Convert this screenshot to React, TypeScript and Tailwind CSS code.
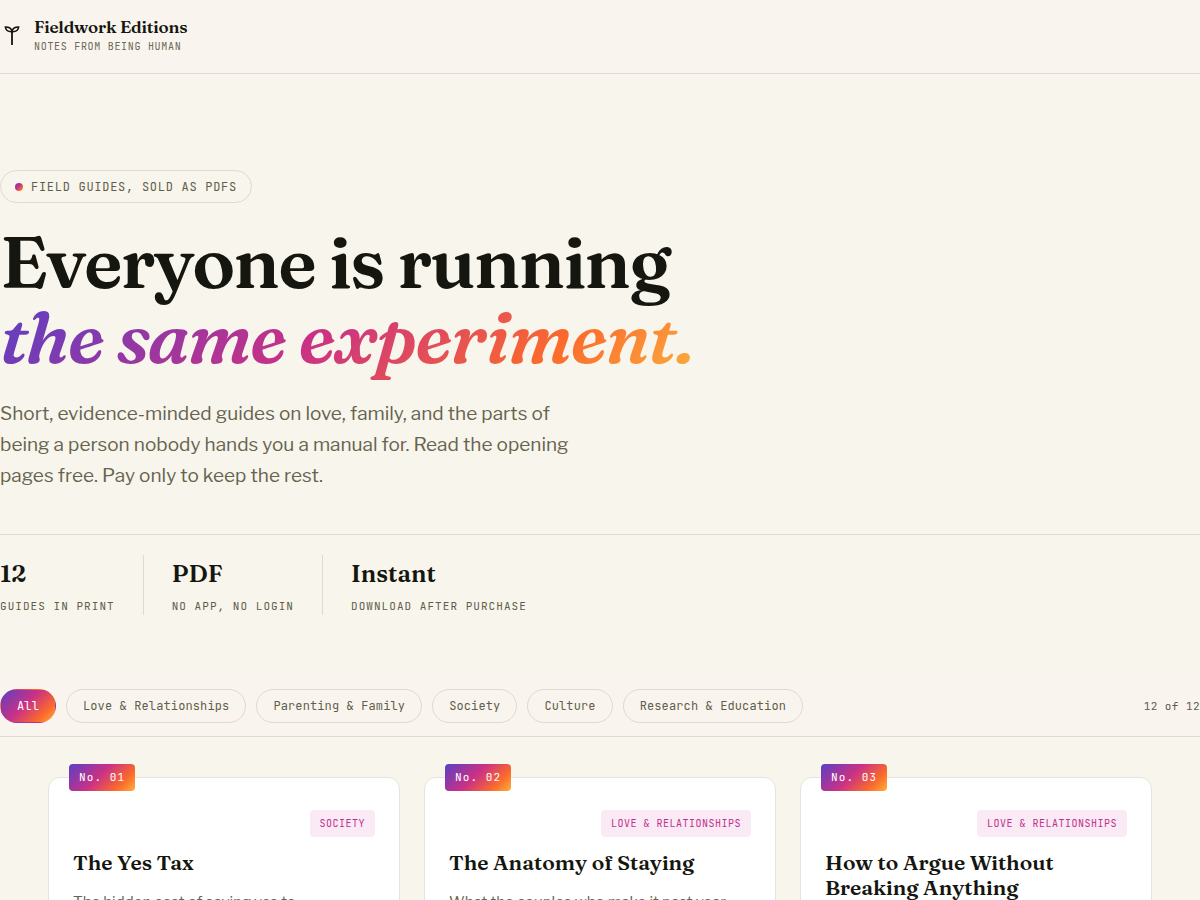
import { useState } from 'react';

const serif = "font-['Fraunces','Liberation_Serif',serif] font-semibold";
const mono = "font-['JetBrains_Mono','DejaVu_Sans_Mono',monospace]";
const spectrum =
  'bg-[linear-gradient(135deg,#5b3fc4_0%,#c93186_45%,#fb6a2c_78%,#fbb040_100%)]';

const categories = [
  'All',
  'Love & Relationships',
  'Parenting & Family',
  'Society',
  'Culture',
  'Research & Education',
];

const stats = [
  { value: '12', label: 'Guides in print' },
  { value: 'PDF', label: 'No app, no login' },
  { value: 'Instant', label: 'Download after purchase' },
];

const guides = [
  {
    no: '01',
    category: 'Society',
    title: 'The Yes Tax',
    blurb: 'The hidden cost of saying yes to',
  },
  {
    no: '02',
    category: 'Love & Relationships',
    title: 'The Anatomy of Staying',
    blurb: 'What the couples who make it past year',
  },
  {
    no: '03',
    category: 'Love & Relationships',
    title: 'How to Argue Without Breaking Anything',
    blurb: '',
  },
];

function Sprout() {
  return (
    <svg
      viewBox="0 0 24 24"
      className="size-6 shrink-0"
      fill="none"
      stroke="currentColor"
      strokeWidth="1.8"
      aria-hidden="true"
    >
      <path d="M12 21V8" />
      <path d="M12 7.7C11.6 4.6 9 3 5.4 3 5.7 6.3 8.2 7.9 12 7.7Z" strokeWidth="1.6" />
      <path d="M12 7.7C12.4 4.6 15 3 18.6 3 18.3 6.3 15.8 7.9 12 7.7Z" strokeWidth="1.6" />
    </svg>
  );
}

export default function App() {
  const [active, setActive] = useState('All');

  return (
    <div className="h-screen overflow-hidden bg-[#f8f5ec] font-['Libre_Franklin','Liberation_Sans',sans-serif] text-[#15160f]">
      <header className="border-b border-[#dddad2] bg-[#f9f5ee] pt-4 pb-[18px]">
        <a href="#top" className="flex items-center gap-2.5">
          <Sprout />
          <span className="flex flex-col">
            <span className={`${serif} text-[17px] leading-[22px] tracking-[-0.01em]`}>
              Fieldwork Editions
            </span>
            <span className={`${mono} text-[10px] leading-[17px] tracking-[0.07em] text-[#6a6856] uppercase`}>
              Notes from being human
            </span>
          </span>
        </a>
      </header>

      <main id="top">
        <section className="pt-24">
          <p
            className={`${mono} flex h-[33px] w-fit items-center gap-2 rounded-full border border-[#dddad2] px-3.5 text-xs tracking-[0.06em] text-[#5f5d4b] uppercase`}
          >
            <span className={`${spectrum} size-2 rounded-full`} />
            Field guides, sold as PDFs
          </p>
          <h1 className={`${serif} mt-[22px] text-[72px] leading-[75px] tracking-[-0.025em]`}>
            <span className="block">Everyone is running</span>
            <em
              className={`${spectrum} inline-block bg-clip-text pb-2 tracking-[-0.02em] text-transparent`}
            >
              the same experiment.
            </em>
          </h1>
          <p className="mt-[15px] max-w-[600px] text-[19px] leading-[31px] text-[#66634f]">
            Short, evidence-minded guides on love, family, and the parts of being a person nobody
            hands you a manual for. Read the opening pages free. Pay only to keep the rest.
          </p>
          <dl className="mt-[43px] flex gap-7 border-t border-[#dddad2] pt-5">
            {stats.map((s) => (
              <div
                key={s.label}
                className="flex h-[60px] flex-col-reverse justify-between border-r border-[#dddad2] pr-7 last:border-r-0"
              >
                <dt className={`${mono} text-[11px] leading-[18px] tracking-[0.095em] text-[#5f5d4b] uppercase`}>
                  {s.label}
                </dt>
                <dd className={`${serif} text-2xl leading-[38px]`}>{s.value}</dd>
              </div>
            ))}
          </dl>
        </section>

        <nav
          aria-label="Categories"
          className="mt-[60px] flex items-center justify-between border-b border-[#dddad2] bg-[#f9f5ee] pt-3.5 pb-[13px]"
        >
          <div className="flex gap-2.5">
            {categories.map((c) => (
              <button
                key={c}
                type="button"
                aria-pressed={c === active}
                onClick={() => setActive(c)}
                className={`${mono} h-[34px] rounded-full border px-4 text-xs tracking-[0.01em] whitespace-nowrap ${
                  c === active
                    ? `${spectrum} border-transparent text-white`
                    : 'border-[#dddad2] text-[#5f5d4b]'
                }`}
              >
                {c}
              </button>
            ))}
          </div>
          <span className={`${mono} text-[11px] tracking-[0.04em] text-[#5f5d4b]`}>12 of 12</span>
        </nav>

        <section className="grid grid-cols-3 gap-6 px-12 pt-10">
          {guides.map((g) => (
            <article
              key={g.no}
              className="relative min-h-96 rounded-xl border border-[#e6e4e0] bg-white px-6 pt-8"
            >
              <span
                className={`${mono} ${spectrum} absolute -top-3.5 left-5 rounded-sm px-2.5 text-[11px] leading-[27px] tracking-widest text-white`}
              >
                No. {g.no}
              </span>
              <div className="flex justify-end">
                <span
                  className={`${mono} rounded-sm bg-[#faeaf5] px-2.5 text-[10px] leading-[27px] tracking-wider text-[#c0308a] uppercase`}
                >
                  {g.category}
                </span>
              </div>
              <h2 className={`${serif} mt-[13px] text-[21px] leading-[25px]`}>{g.title}</h2>
              {g.blurb && <p className="mt-[15px] text-[15px] leading-6 text-[#66634f]">{g.blurb}</p>}
            </article>
          ))}
        </section>
      </main>
    </div>
  );
}
